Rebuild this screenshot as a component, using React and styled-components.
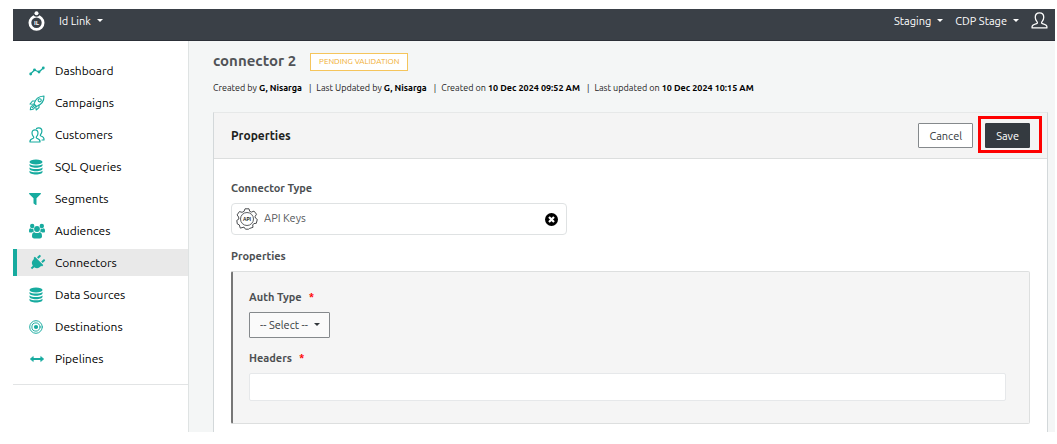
import React from 'react';
import styled, { createGlobalStyle, css } from 'styled-components';
import { FaFilter, FaPlug } from 'react-icons/fa';

const GlobalStyle = createGlobalStyle`
  *, *::before, *::after { box-sizing: border-box; }
  body {
    margin: 0;
    background: #fff;
    color: #000;
    font-family: Ubuntu, "Open Sans", "Noto Sans", sans-serif;
    font-size: 12px;
  }
  button, input, select { font: inherit; color: inherit; margin: 0; }
  h1, h2, p, ul { margin: 0; padding: 0; }
`;

const Page = styled.div`
  padding: 9px 2px 12px 13px;
`;

const TopBar = styled.header`
  display: flex;
  align-items: center;
  justify-content: space-between;
  height: 32px;
  padding: 0 7px 8px 15px;
  background: #3a4047;
  border-bottom: 1px solid #2c3038;
  color: #fff;
`;

const BarGroup = styled.div`
  display: flex;
  align-items: center;
  gap: ${(p) => p.$gap}px;
`;

const MenuButton = styled.button`
  display: flex;
  align-items: center;
  gap: 6px;
  padding: 0;
  border: 0;
  background: none;
  font-size: 11px;
  line-height: 16px;
  white-space: nowrap;
`;

const Caret = styled.span`
  border: 3px solid transparent;
  border-top-color: currentColor;
  border-bottom: 0;
`;

const Body = styled.div`
  display: grid;
  grid-template-columns: 176px minmax(0, 1fr);
`;

const Sidebar = styled.nav`
  border-right: 1px solid #dfe3e3;
`;

const NavList = styled.ul`
  display: flex;
  flex-direction: column;
  gap: 5px;
  padding: 16px 0 12px;
  border-bottom: 1px solid #e2e4e5;
  list-style: none;
`;

const NavLink = styled.a`
  display: flex;
  align-items: center;
  gap: 10px;
  height: 27px;
  padding-left: 12px;
  border-left: 4px solid transparent;
  color: #000;
  line-height: 16px;
  text-decoration: none;
  ${(p) =>
    p.$active &&
    css`
      background: #e9e9e9;
      border-left-color: #17ab9f;
    `}
`;

const NavIcon = styled.span`
  display: flex;
  width: 16px;
  color: #17ab9f;
`;

const Main = styled.main`
  padding: 10px 7px 0 24px;
  background: #f4f6f6;
`;

const TitleRow = styled.div`
  display: flex;
  align-items: center;
  gap: 14px;
  height: 22px;
`;

const Title = styled.h1`
  padding-bottom: 2px;
  color: #505357;
  font-size: 15px;
  font-weight: 600;
  line-height: 20px;
`;

const Badge = styled.span`
  padding: 0 8px;
  border: 1px solid #f5c55c;
  background: #fff;
  color: #f0ad2e;
  font-size: 8px;
  line-height: 16px;
`;

const Meta = styled.p`
  display: flex;
  height: 14px;
  margin: 8px 0 17px;
  color: #1c1c1c;
  font-size: 9px;
  line-height: 14px;
  white-space: nowrap;

  b {
    color: #000;
  }
`;

const MetaItem = styled.span`
  & + &::before {
    content: '|';
    padding: 0 5px 0 7px;
    color: #222;
  }
`;

const Card = styled.section`
  border: 1px solid #d3d8da;
  border-top-color: #e6e8e8;
  border-bottom: 0;
  background: #fff;
`;

const CardHeader = styled.header`
  display: flex;
  align-items: center;
  justify-content: space-between;
  height: 46px;
  padding: 0 17px;
  border-bottom: 1px solid #dcdede;
  background: #f4f4f4;
`;

const CardTitle = styled.h2`
  color: #1d1f20;
  font-size: 12px;
  font-weight: 700;
  line-height: 16px;
`;

const Actions = styled.div`
  display: flex;
  gap: 12px;
`;

const Button = styled.button`
  height: 25px;
  padding: 0 10px;
  border: 1px solid ${(p) => (p.$primary ? '#343a40' : '#85898c')};
  border-radius: 1px;
  background: ${(p) => (p.$primary ? '#343a40' : '#fff')};
  color: ${(p) => (p.$primary ? '#fff' : '#343a40')};
  font-size: 11px;
  line-height: 16px;
`;

const Highlight = styled.div`
  position: relative;
  &::after {
    content: '';
    position: absolute;
    inset: -7px -12px -5px -7px;
    border: 3px solid #fe0000;
    pointer-events: none;
  }
`;

const CardBody = styled.div`
  padding: 21px 17px 8px;
`;

const Label = styled.label`
  display: block;
  width: max-content;
  color: #4c4f52;
  font-size: 11px;
  font-weight: 600;
  line-height: 16px;
`;

const Required = styled.span`
  margin-left: 7px;
  color: #f00;
`;

const PickerBox = styled.div`
  display: flex;
  align-items: center;
  width: 336px;
  max-width: 100%;
  height: 32px;
  margin: 7px 0 13px;
  padding: 0 8px 0 4px;
  border: 1px solid #dfe2e3;
  border-radius: 4px;
`;

const PickerInput = styled.input`
  flex: 1;
  min-width: 0;
  padding: 0 0 2px 6px;
  border: 0;
  outline: 0;
  background: none;
  color: #56595c;
  font-size: 11px;
  line-height: 16px;
`;

const IconButton = styled.button`
  display: flex;
  padding: 0;
  border: 0;
  background: none;
`;

const FieldPanel = styled.div`
  margin-top: 7px;
  padding: 17px 23px 22px 16px;
  border: 1px solid #dddfdf;
  border-left: 2px solid #777;
  border-radius: 2px;
  background: #f5f5f5;
`;

const SelectBox = styled.div`
  position: relative;
  width: 81px;
  margin: 7px 0 12px;
  color: #33383c;
  ${Caret} {
    position: absolute;
    right: 10px;
    top: 11px;
    pointer-events: none;
  }
`;

const Select = styled.select`
  display: block;
  width: 100%;
  height: 26px;
  padding: 0 10px;
  border: 1px solid #85898c;
  border-radius: 1px;
  background: #fafafa;
  appearance: none;
  font-size: 11px;
`;

const TextInput = styled.input`
  display: block;
  width: 100%;
  height: 28px;
  margin-top: 7px;
  padding: 0 8px;
  border: 1px solid #e6e8ea;
  border-radius: 2px;
  background: #fff;
`;

const LineSvg = ({ children, size = 16, width = 1, ...rest }) => (
  <svg
    width={size}
    height={size}
    viewBox="0 0 16 16"
    fill="none"
    stroke="currentColor"
    strokeWidth={width}
    strokeLinecap="round"
    strokeLinejoin="round"
    aria-hidden="true"
    {...rest}
  >
    {children}
  </svg>
);

const TrendIcon = () => (
  <LineSvg width={1.3}>
    <path d="M1.500 11 5.500 7 10 9l4.300-4" />
    <g fill="currentColor" stroke="none">
      <circle cx="1.700" cy="11" r="1.400" />
      <circle cx="5.500" cy="6.800" r="1.400" />
      <circle cx="10" cy="9" r="1.400" />
      <circle cx="14.300" cy="5" r="1.400" />
    </g>
  </LineSvg>
);

const RocketIcon = () => (
  <LineSvg width={1.1}>
    <path d="M5 9C6 5 9 1.300 15 1c.2 5.600-3.500 9-7.500 10.500z" />
    <circle cx="10.700" cy="5.300" r="1.600" />
    <path d="M6.200 6H3.500L1 9l3.800.3M10 10v2.600L7.200 15l-.5-3.400M4 10.500c-1.700.2-2.500 1.700-2.700 4.200 2.500-.1 4-.9 4.200-2.500M3.300 12.700l2-2" />
  </LineSvg>
);

const CustomersIcon = () => (
  <LineSvg width={1.2}>
    <path d="M1 15c-.4-2.500.7-3 3.200-3.800.7-.3.700-1 .2-1.600C3.400 8.500 3 7.500 3 6c0-2 1.200-3.200 3-3.200S9 4 9 6c0 1.500-.4 2.500-1.400 3.600-.5.600-.5 1.300.2 1.600 2.500.8 3.600 1.300 3.200 3.800z" />
    <path d="M7.500 1.500C8.200.9 8.900.8 9.700.8c2 0 3.200 1.300 3.200 3.200 0 1.400-.4 2.400-1.300 3.500-.5.700-.4 1.200.3 1.500 2.300.8 3.400 1.400 3.100 4H13" />
  </LineSvg>
);

const DatabaseIcon = () => (
  <svg width="14" height="16" viewBox="0 0 14 16" fill="currentColor" aria-hidden="true">
    <ellipse cx="7" cy="3" rx="6.500" ry="2.600" />
    <path d="M.5 5c1.200 1 3.500 1.500 6.500 1.500s5.300-.5 6.500-1.500v1.300C13.500 7.700 10.500 8.800 7 8.800S.5 7.700.5 6.300z" />
    <path d="M.5 8.400C1.700 9.400 4 9.900 7 9.900s5.300-.5 6.500-1.500v1.300c0 1.400-3 2.500-6.500 2.500S.5 11.100.5 9.700z" />
    <path d="M.5 11.800c1.200 1 3.500 1.500 6.500 1.500s5.300-.5 6.500-1.500v1.300c0 1.400-3 2.500-6.500 2.500S.5 14.500.5 13.100z" />
  </svg>
);

const AudienceIcon = () => (
  <svg width="16" height="16" viewBox="0 0 16 16" fill="currentColor" aria-hidden="true">
    <circle cx="3.200" cy="3" r="2.200" />
    <circle cx="12.800" cy="3" r="2.200" />
    <path d="M0 8c0-1.800.5-2.700 1.500-2.700.8.700 2.400.7 3 .3-.3 1.200 0 2.200.6 2.900-.8 0-1.600.3-2.200 1H1.200C.4 9.500 0 9 0 8zM16 8c0-1.800-.5-2.700-1.500-2.700-.8.700-2.400.7-3 .3.300 1.200 0 2.200-.6 2.900.8 0 1.600.3 2.200 1h1.700c.8 0 1.200-.5 1.200-1.500z" />
    <circle cx="8" cy="6" r="2.900" />
    <path d="M3 13.200c0-2.500.7-4 2.400-4 1.500 1.200 3.700 1.200 5.200 0 1.700 0 2.400 1.500 2.400 4 0 1.400-.8 2.200-2.200 2.200H5.200C3.800 15.400 3 14.600 3 13.200z" />
  </svg>
);

const PlugIcon = styled(FaPlug)`
  transform: rotate(45deg);
`;

const TargetIcon = () => (
  <LineSvg size={14} width={1.1}>
    <circle cx="8" cy="8" r="7.200" />
    <circle cx="8" cy="8" r="4.700" />
    <circle cx="8" cy="8" r="2.400" fill="currentColor" stroke="none" />
  </LineSvg>
);

const ArrowsIcon = () => (
  <LineSvg width={1.8}>
    <path d="M3 8h10" />
    <path d="M4 5.800 1.300 8 4 10.200zM12 5.800 14.700 8 12 10.200z" fill="currentColor" strokeWidth="0.8" />
  </LineSvg>
);

const UserIcon = () => (
  <LineSvg size={17} width={1.2}>
    <path d="M1 15c-.3-2.300.8-2.900 4.300-4 .9-.3.900-1.200.3-1.900C4.500 8 4 6.700 4 5c0-2.500 1.500-4.200 4-4.200S12 2.500 12 5c0 1.700-.5 3-1.600 4.100-.6.700-.6 1.600.3 1.900 3.500 1.100 4.600 1.700 4.300 4z" />
  </LineSvg>
);

const Logo = () => (
  <svg width="17" height="20" viewBox="0 0 17 20" role="img" aria-label="Id Link">
    <circle cx="8.500" cy="11.800" r="6.600" fill="none" stroke="#fff" strokeWidth="2.800" />
    <circle cx="8.500" cy="2.600" r="3.200" fill="#3a4047" />
    <circle cx="8.500" cy="2.200" r="2" fill="#fff" />
    <text x="8.500" y="14" fill="#fff" fontSize="6" fontWeight="600" textAnchor="middle">IL</text>
  </svg>
);

const ApiIcon = () => (
  <svg width="22" height="22" viewBox="0 0 22 22" fill="none" stroke="#4a4d50" aria-hidden="true">
    <path
      d="M9 .8h4l.7 2.500 1.700.8 2.600-1 2.500 3.100-1.400 2.300.3 1.500 1.900 1.400-1 3.900-2.500.3-1.100 1.400.3 2.300-3.300 1.100L12.500 21.200h-3L8 19.100l-3.700 1-1-3.200-2-1-.5-3.500L2.900 11 2.600 9 1.100 6.900 3.400 3.600l2.700.7 2-1z"
      strokeLinejoin="round"
    />
    <circle cx="11" cy="11" r="6.500" strokeWidth="0.900" />
    <text x="11" y="13" fill="#222" stroke="none" fontSize="5" fontWeight="700" textAnchor="middle">API</text>
  </svg>
);

const ClearIcon = () => (
  <svg width="13" height="13" viewBox="0 0 13 13" aria-hidden="true">
    <circle cx="6.500" cy="6.500" r="6.500" fill="#000" />
    <path d="m4 4 5 5m0-5L4 9" stroke="#fff" strokeWidth="2.200" />
  </svg>
);

const navItems = [
  { label: 'Dashboard', icon: <TrendIcon /> },
  { label: 'Campaigns', icon: <RocketIcon /> },
  { label: 'Customers', icon: <CustomersIcon /> },
  { label: 'SQL Queries', icon: <DatabaseIcon /> },
  { label: 'Segments', icon: <FaFilter size={12} /> },
  { label: 'Audiences', icon: <AudienceIcon /> },
  { label: 'Connectors', icon: <PlugIcon size={16} />, active: true },
  { label: 'Data Sources', icon: <DatabaseIcon /> },
  { label: 'Destinations', icon: <TargetIcon /> },
  { label: 'Pipelines', icon: <ArrowsIcon /> },
];

const metaItems = [
  ['Created by', 'G, Nisarga'],
  ['Last Updated by', 'G, Nisarga'],
  ['Created on', '10 Dec 2024 09:52 AM'],
  ['Last updated on', '10 Dec 2024 10:15 AM'],
];

const Menu = ({ children }) => (
  <MenuButton type="button" aria-haspopup="menu">
    {children}
    <Caret />
  </MenuButton>
);

export default function App() {
  return (
    <Page>
      <GlobalStyle />
      <TopBar>
        <BarGroup $gap={14}>
          <Logo />
          <Menu>Id Link</Menu>
        </BarGroup>
        <BarGroup $gap={12}>
          <Menu>Staging</Menu>
          <Menu>CDP Stage</Menu>
          <IconButton type="button" aria-label="Account">
            <UserIcon />
          </IconButton>
        </BarGroup>
      </TopBar>
      <Body>
        <Sidebar>
          <NavList>
            {navItems.map(({ label, icon, active }) => (
              <li key={label}>
                <NavLink href="#" $active={active} aria-current={active ? 'page' : undefined}>
                  <NavIcon>{icon}</NavIcon>
                  {label}
                </NavLink>
              </li>
            ))}
          </NavList>
        </Sidebar>
        <Main>
          <TitleRow>
            <Title>connector 2</Title>
            <Badge>PENDING VALIDATION</Badge>
          </TitleRow>
          <Meta>
            {metaItems.map(([label, value]) => (
              <MetaItem key={label}>
                {label} <b>{value}</b>
              </MetaItem>
            ))}
          </Meta>
          <Card>
            <CardHeader>
              <CardTitle>Properties</CardTitle>
              <Actions>
                <Button type="button">Cancel</Button>
                <Highlight>
                  <Button type="button" $primary>Save</Button>
                </Highlight>
              </Actions>
            </CardHeader>
            <CardBody>
              <Label htmlFor="connector-type">Connector Type</Label>
              <PickerBox>
                <ApiIcon />
                <PickerInput id="connector-type" value="API Keys" readOnly />
                <IconButton type="button" aria-label="Clear connector type">
                  <ClearIcon />
                </IconButton>
              </PickerBox>
              <Label as="p">Properties</Label>
              <FieldPanel>
                <Label htmlFor="auth-type">
                  Auth Type<Required>*</Required>
                </Label>
                <SelectBox>
                  <Select id="auth-type" defaultValue="">
                    <option value="">-- Select --</option>
                  </Select>
                  <Caret />
                </SelectBox>
                <Label htmlFor="headers">
                  Headers<Required>*</Required>
                </Label>
                <TextInput id="headers" type="text" />
              </FieldPanel>
            </CardBody>
          </Card>
        </Main>
      </Body>
    </Page>
  );
}
